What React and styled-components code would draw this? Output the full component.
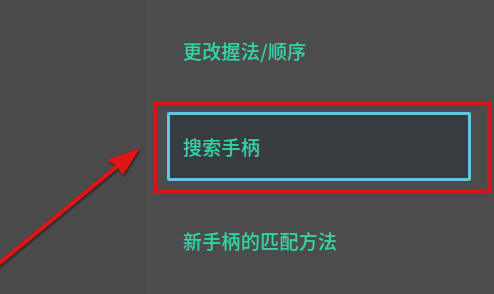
import React from 'react';
import styled, { createGlobalStyle } from 'styled-components';

const GlobalStyle = createGlobalStyle`
  html, body {
    margin: 0;
    padding: 0;
    background: #4b4b4b;
  }
  body {
    font-family: "Noto Sans CJK SC", "Noto Sans", sans-serif;
  }
`

const Screen = styled.div`
  position: relative;
  width: 494px;
  height: 294px;
  display: flex;
  overflow: hidden;
`

// left empty column
const Sidebar = styled.div`
  width: 147px;
  background-color: #4a4a4a;
`

const Main = styled.div`
  flex: 1;
  display: flex;
  flex-direction: column;
  background-color: #4c4c4c;
  border-left: 1px solid #505050;
  padding: 0 3px 0 5px;
`

const MenuItem = styled.div`
  height: ${props => props.$height}px;
  display: flex;
  align-items: center;
  padding-left: 30px;
  padding-bottom: ${props => props.$shift || 0}px;
  box-sizing: border-box;
  color: #34d3a6;
  font-size: 19px;
  font-weight: 500;
  letter-spacing: 0.3px;
`

// red annotation frame
const Highlight = styled.div`
  height: 92px;
  box-sizing: border-box;
  border: 4px solid #d3161a;
  padding: 7px 16px 8px 10px;
  display: flex;
`

const Selected = styled.div`
  flex: 1;
  display: flex;
  align-items: center;
  padding-left: 13px;
  border: 3px solid #64c5de;
  border-radius: 2px;
  background-color: #383b40;
  color: #34d3a6;
  font-size: 19px;
  font-weight: 500;
  letter-spacing: 0.3px;
`

const Arrow = styled.svg`
  position: absolute;
  left: 0;
  top: 0;
  pointer-events: none;
`

export default function App() {
  return (
    <>
      <GlobalStyle />
      <Screen>
        <Sidebar />
        <Main>
          <MenuItem $height={101}>更改握法/顺序</MenuItem>
          <Highlight>
            <Selected>搜索手柄</Selected>
          </Highlight>
          <MenuItem $height={101} $shift={7}>新手柄的匹配方法</MenuItem>
        </Main>
        <Arrow width="160" height="294" viewBox="0 0 160 294">
          <defs>
            <filter id="sh" x="-20%" y="-20%" width="140%" height="140%">
              <feDropShadow dx="1" dy="1.5" stdDeviation="1.2" floodColor="#000" floodOpacity="0.55" />
            </filter>
          </defs>
          <g filter="url(#sh)">
            <line x1="-4" y1="266" x2="120" y2="164" stroke="#e01212" strokeWidth="4" strokeLinecap="round" />
            <polygon points="140,148 107,160 117,166 123,175" fill="#e01212" />
          </g>
        </Arrow>
      </Screen>
    </>
  );
}
